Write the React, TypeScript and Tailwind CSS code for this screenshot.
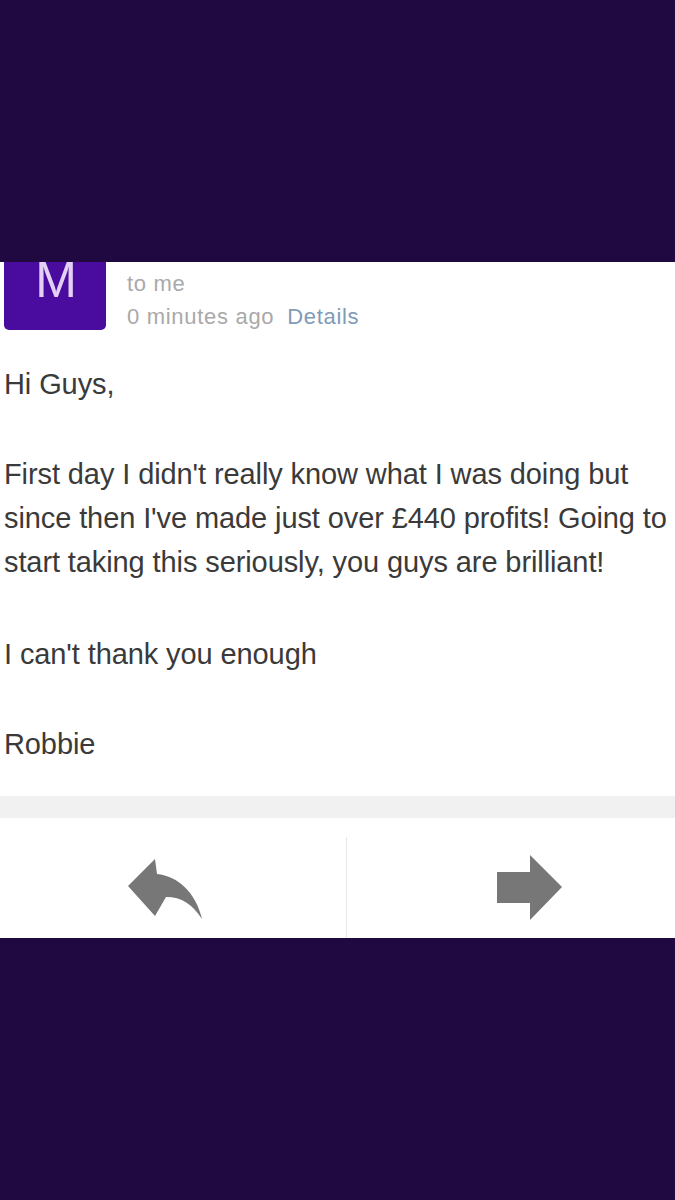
import React from "react";

const ReplyIcon: React.FC = () => (
  <svg width="76" height="63" viewBox="0 0 76 63" className="text-[#777777]">
    <path
      fill="currentColor"
      d="M0 29 L27 2 L29 17 C50 19 68 36 74 62 C64 47 54 40 38 40 L27 59 Z"
    />
  </svg>
);

const ForwardIcon: React.FC = () => (
  <svg width="66" height="66" viewBox="0 0 66 66" className="text-[#777777]">
    <path fill="currentColor" d="M0 17 H33 V0 L65 32 L33 65 V48 H0 Z" />
  </svg>
);

const App: React.FC = () => {
  return (
    <div className="min-h-[1200px] bg-[#1f0940] flex flex-col font-['Liberation_Sans',Arial,sans-serif]">
      {/* top gap */}
      <div className="h-[262px]" />

      {/* mail card */}
      <div className="bg-white h-[676px] flex flex-col overflow-hidden">
        {/* header */}
        <div className="flex items-start">
          <div className="ml-[4px] w-[102px] h-[68px] bg-[#4a0c9e] rounded-b-[5px] flex justify-center">
            <span className="text-[50px] leading-[50px] text-[#e4cff5] -mt-[7px] pl-[2px]">M</span>
          </div>
          <div className="ml-[21px] pt-[5px] text-[22px] leading-[33px] text-[#a9a9a9] tracking-[0.7px]">
            <div>to me</div>
            <div>
              0 minutes ago <span className="ml-[6px] text-[#7f9bb8]">Details</span>
            </div>
          </div>
        </div>

        {/* body */}
        <div className="px-[4px] pt-[29px] text-[29px] leading-[44px] text-[#3a3a3a] whitespace-nowrap tracking-[-0.1px]">
          <p>Hi Guys,</p>
          <p className="mt-[46px]">
            First day I didn&apos;t really know what I was doing but
            <br />
            since then I&apos;ve made just over £440 profits! Going to
            <br />
            start taking this seriously, you guys are brilliant!
          </p>
          <p className="mt-[48px]">I can&apos;t thank you enough</p>
          <p className="mt-[46px]">Robbie</p>
        </div>

        <div className="flex-1" />

        {/* separator band */}
        <div className="h-[22px] bg-[#f1f1f1]" />

        {/* actions */}
        <div className="h-[120px] flex">
          <div className="w-[346px] flex items-end justify-center pb-[18px] pr-[14px]">
            <ReplyIcon />
          </div>
          <div className="w-px mt-[19px] bg-[#e6e6e6]" />
          <div className="flex-1 flex items-end justify-center pb-[17px] pl-[37px]">
            <ForwardIcon />
          </div>
        </div>
      </div>

      <div className="flex-1" />
    </div>
  );
};

export default App;
